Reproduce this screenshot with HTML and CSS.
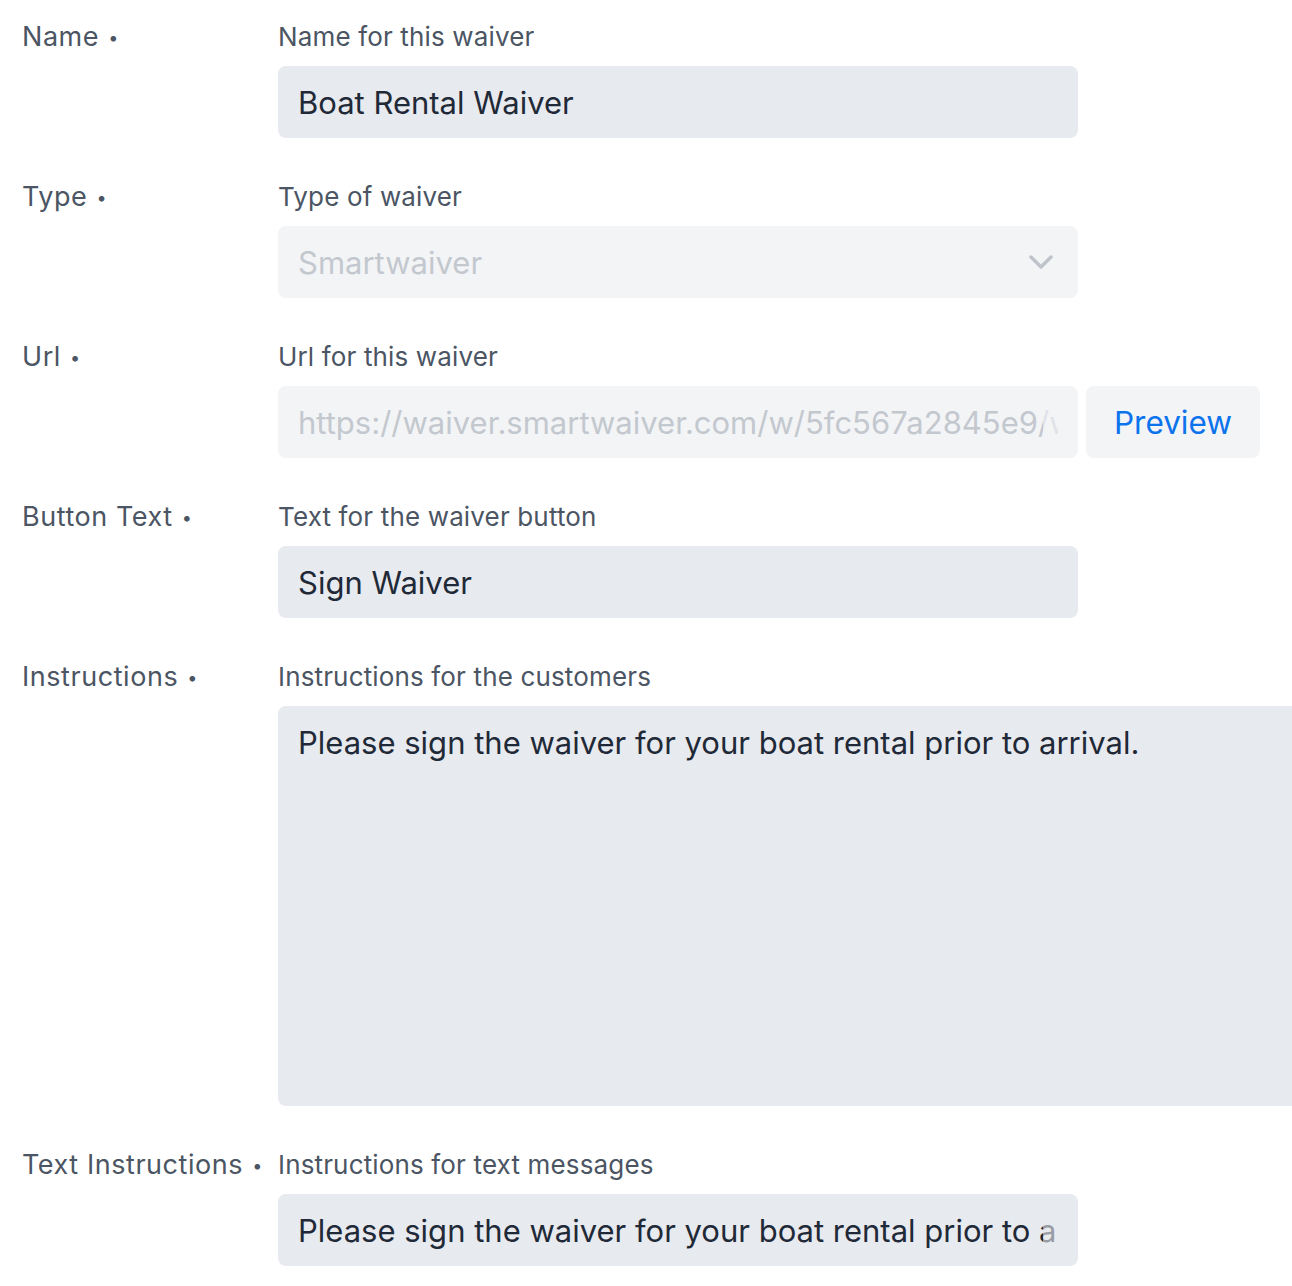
FILE: index.html
```html
<html lang="en">
  <head>
    <meta charset="UTF-8" />
    <meta name="viewport" content="width=device-width, initial-scale=1.0" />
    <title>Waiver Settings</title>
    <link rel="stylesheet" href="styles.css">
  </head>
  <body>
    <form class="form">
      <div class="row">
        <label class="label">Name <span class="dot">•</span></label>
        <div class="field">
          <p class="hint">Name for this waiver</p>
          <input class="input" type="text" value="Boat Rental Waiver" />
        </div>
      </div>

      <div class="row">
        <label class="label">Type <span class="dot">•</span></label>
        <div class="field">
          <p class="hint">Type of waiver</p>
          <div class="select">
            <span>Smartwaiver</span>
            <svg class="chevron" width="24" height="14" viewBox="0 0 24 14" fill="none">
              <path d="M2 2l10 10L22 2" stroke="currentColor" stroke-width="3.5" stroke-linecap="round" stroke-linejoin="round" />
            </svg>
          </div>
        </div>
      </div>

      <div class="row">
        <label class="label">Url <span class="dot">•</span></label>
        <div class="field">
          <p class="hint">Url for this waiver</p>
          <div class="inline">
            <div class="fade fade-light">
              <input class="input disabled" type="text" disabled value="https://waiver.smartwaiver.com/w/5fc567a2845e9/web/" />
            </div>
            <button type="button" class="preview">Preview</button>
          </div>
        </div>
      </div>

      <div class="row">
        <label class="label">Button Text <span class="dot">•</span></label>
        <div class="field">
          <p class="hint">Text for the waiver button</p>
          <input class="input" type="text" value="Sign Waiver" />
        </div>
      </div>

      <div class="row">
        <label class="label">Instructions <span class="dot">•</span></label>
        <div class="field">
          <p class="hint">Instructions for the customers</p>
          <textarea class="textarea">Please sign the waiver for your boat rental prior to arrival.</textarea>
        </div>
      </div>

      <div class="row">
        <label class="label">Text Instructions <span class="dot">•</span></label>
        <div class="field">
          <p class="hint">Instructions for text messages</p>
          <div class="fade">
            <input class="input" type="text" value="Please sign the waiver for your boat rental prior to arrival." />
          </div>
        </div>
      </div>
    </form>
  </body>
</html>
```

FILE: styles.css
```css
html {
  overflow: hidden;
}
body {
  margin: 0;
  background: #fff;
  font-family: "Inter", "Noto Sans", "Liberation Sans", sans-serif;
  color: #4b5563;
}
.form {
  display: flex;
  flex-direction: column;
  gap: 41px;
  padding: 19px 0 0 22px;
}
.row {
  display: grid;
  grid-template-columns: 256px 1fr;
}
.label {
  font-size: 27px;
  line-height: 36px;
  letter-spacing: 0.55px;
  color: #4b5563;
  white-space: nowrap;
}
.dot {
  font-size: 18px;
  margin-left: 1px;
  vertical-align: 2px;
}
.field {
  display: flex;
  flex-direction: column;
  gap: 11px;
}
.hint {
  margin: 0;
  font-size: 26px;
  line-height: 36px;
  letter-spacing: 0.15px;
  color: #4b5563;
}
.input {
  width: 800px;
  height: 72px;
  box-sizing: border-box;
  padding: 0 20px;
  border: none;
  border-radius: 8px;
  background: #e7eaee;
  font-family: inherit;
  font-size: 31px;
  color: #1f2937;
  outline: none;
}
.input.disabled {
  background: #f3f4f6;
  color: #c3c8cf;
  -webkit-text-fill-color: #c3c8cf;
}
.fade {
  position: relative;
  width: 800px;
  --fade-bg: 231, 234, 238;
}
.fade::after {
  content: "";
  position: absolute;
  top: 8px;
  bottom: 8px;
  right: 20px;
  width: 15px;
  background: rgba(var(--fade-bg), 0.6);
  pointer-events: none;
}
.fade-light {
  --fade-bg: 243, 244, 246;
}
.select {
  width: 800px;
  height: 72px;
  box-sizing: border-box;
  padding: 0 25px 0 20px;
  border-radius: 8px;
  background: #f3f4f6;
  display: flex;
  align-items: center;
  justify-content: space-between;
  font-size: 31px;
  color: #c3c8cf;
}
.chevron {
  color: #bfc4cb;
}
.inline {
  display: flex;
  gap: 8px;
}
.preview {
  width: 174px;
  height: 72px;
  border: none;
  border-radius: 8px;
  background: #f3f4f6;
  font-family: inherit;
  font-size: 31.5px;
  color: #0b73ec;
  cursor: pointer;
}
.textarea {
  width: 1100px;
  height: 400px;
  box-sizing: border-box;
  padding: 17px 20px;
  border: none;
  border-radius: 8px;
  background: #e7eaee;
  font-family: inherit;
  font-size: 31px;
  line-height: 40px;
  color: #1f2937;
  resize: none;
  outline: none;
}
```
